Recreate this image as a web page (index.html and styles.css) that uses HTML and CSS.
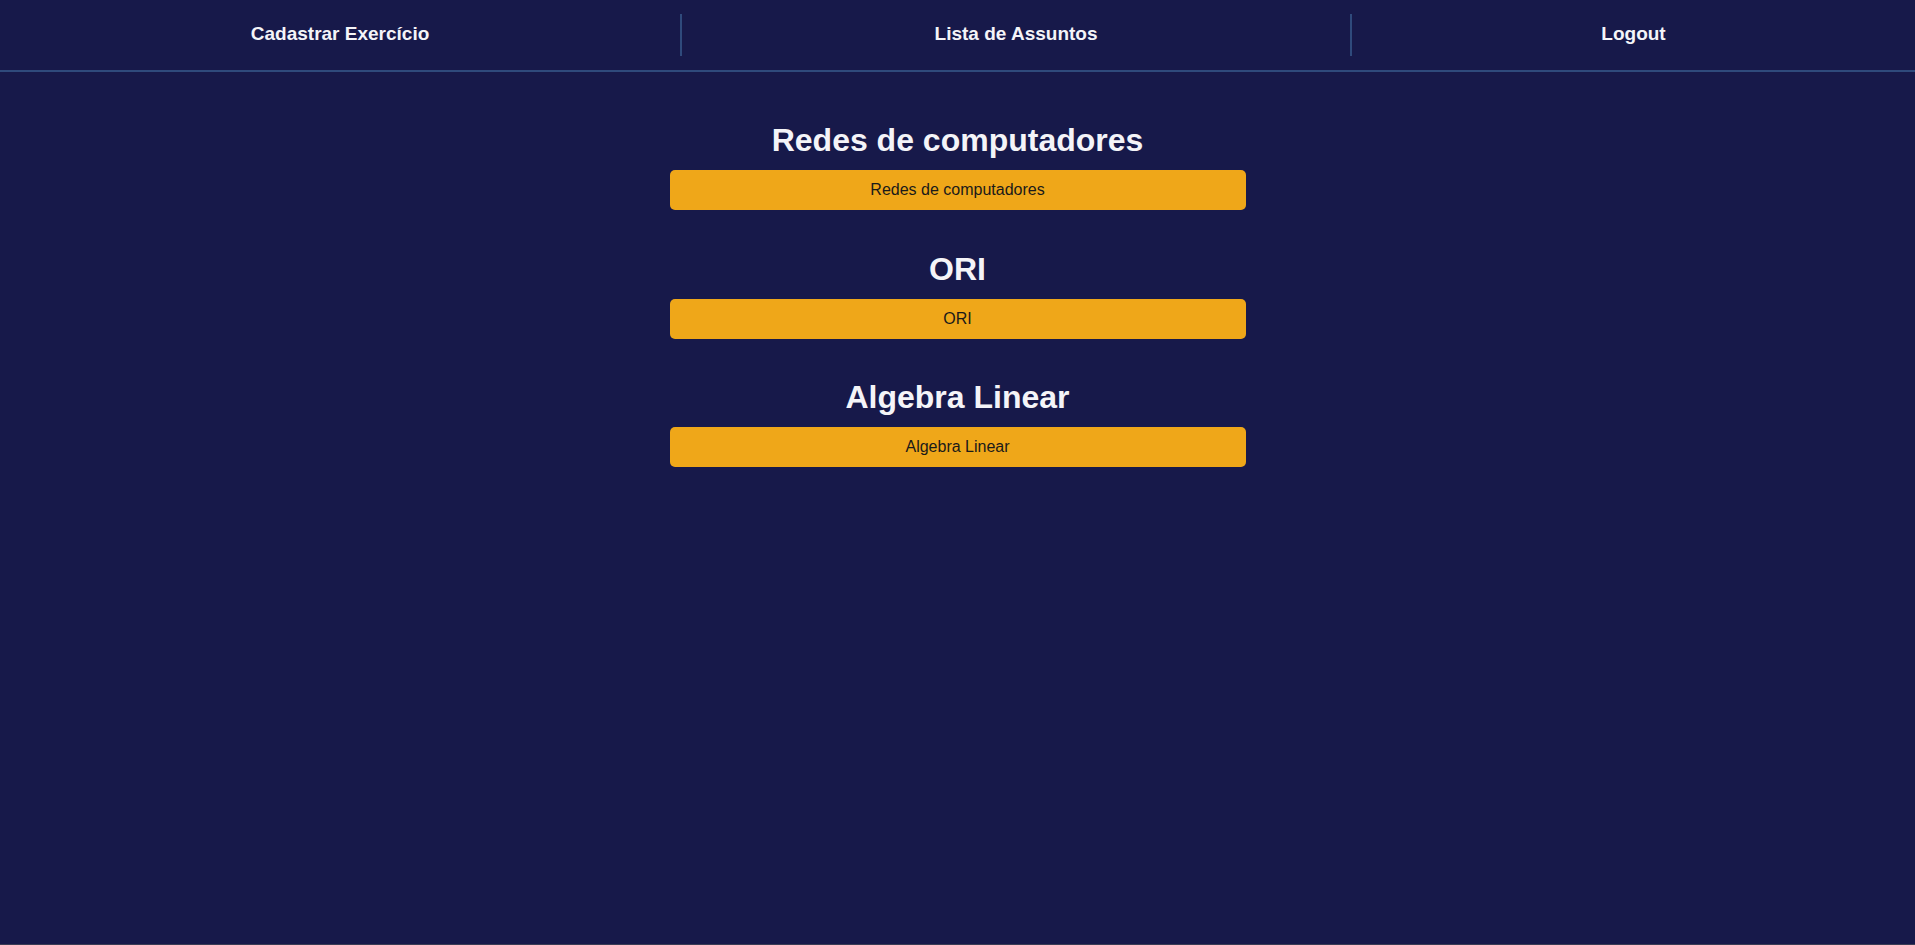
FILE: index.html
```html
<!DOCTYPE html>
<html lang="pt-BR">
<head>
<meta charset="utf-8">
<title>Lista de Assuntos</title>
<link rel="stylesheet" href="styles.css">
</head>
<body>
<nav class="topnav">
  <a class="nav-item nav-item-first" href="#">Cadastrar Exercício</a>
  <a class="nav-item nav-item-mid" href="#">Lista de Assuntos</a>
  <a class="nav-item" href="#">Logout</a>
</nav>
<main class="subjects">
  <section class="subject">
    <h1 class="subject-title">Redes de computadores</h1>
    <button class="subject-btn">Redes de computadores</button>
  </section>
  <section class="subject">
    <h1 class="subject-title">ORI</h1>
    <button class="subject-btn">ORI</button>
  </section>
  <section class="subject">
    <h1 class="subject-title">Algebra Linear</h1>
    <button class="subject-btn">Algebra Linear</button>
  </section>
</main>
</body>
</html>
```

FILE: styles.css
```css
html, body {
  margin: 0;
  padding: 0;
  height: 100%;
}

body {
  background: #17194a;
  font-family: "Liberation Sans", Arial, sans-serif;
  color: #f2f2f7;
  box-sizing: border-box;
  border-bottom: 1px solid #3a3d55;
}

.topnav {
  display: flex;
  align-items: center;
  height: 70px;
  border-bottom: 2px solid #2f4a7c;
}

.nav-item {
  flex: 1 1 auto;
  height: 42px;
  line-height: 40px;
  text-align: center;
  color: #f4f4f8;
  font-weight: bold;
  font-size: 19px;
  text-decoration: none;
}

.nav-item-first {
  flex-grow: 1.006;
}

.nav-item-mid {
  flex-grow: 1.013;
}

.nav-item + .nav-item {
  border-left: 2px solid #2f4a7c;
}

.subjects {
  display: flex;
  flex-direction: column;
  align-items: center;
  gap: 40.5px;
  padding-top: 50px;
}

.subject {
  display: flex;
  flex-direction: column;
  align-items: center;
  gap: 11px;
  width: 576px;
}

.subject-title {
  margin: 0;
  font-size: 32px;
  line-height: 37px;
  font-weight: bold;
  color: #f4f4f8;
}

.subject-btn {
  width: 100%;
  height: 40px;
  border: none;
  border-radius: 5px;
  background: #efa719;
  color: #1a1a1a;
  font-family: "Liberation Sans", Arial, sans-serif;
  font-size: 16px;
  cursor: pointer;
}
```
